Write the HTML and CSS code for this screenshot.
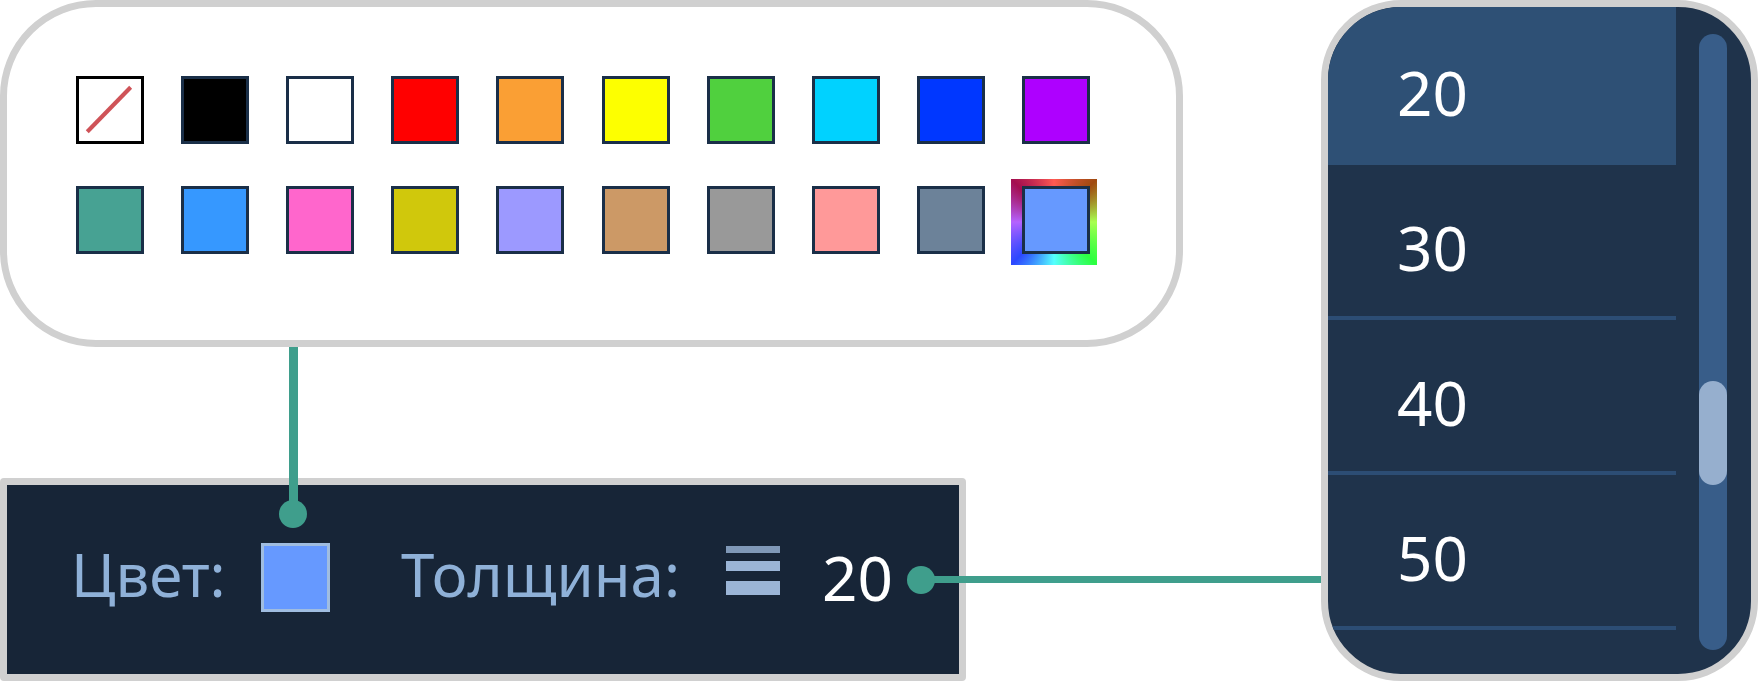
FILE: index.html
```html
<!DOCTYPE html>
<html lang="ru">
<head>
<meta charset="utf-8">
<meta name="viewport" content="width=device-width, initial-scale=1">
<title>Цвет и толщина</title>
<link rel="stylesheet" href="styles.css">
</head>
<body>
<main class="page">
  <div class="main-column">
    <section class="palette" aria-label="Палитра">
      <button class="swatch swatch--none" type="button" aria-label="Без цвета">
        <svg class="slash" viewBox="0 0 60 60" aria-hidden="true"><path d="M8 51 50 8"/></svg>
      </button>
      <button class="swatch swatch--black" type="button" aria-label="Чёрный"></button>
      <button class="swatch swatch--white" type="button" aria-label="Белый"></button>
      <button class="swatch swatch--red" type="button" aria-label="Красный"></button>
      <button class="swatch swatch--orange" type="button" aria-label="Оранжевый"></button>
      <button class="swatch swatch--yellow" type="button" aria-label="Жёлтый"></button>
      <button class="swatch swatch--green" type="button" aria-label="Зелёный"></button>
      <button class="swatch swatch--cyan" type="button" aria-label="Голубой"></button>
      <button class="swatch swatch--blue" type="button" aria-label="Синий"></button>
      <button class="swatch swatch--violet" type="button" aria-label="Фиолетовый"></button>
      <button class="swatch swatch--teal" type="button" aria-label="Бирюзовый"></button>
      <button class="swatch swatch--azure" type="button" aria-label="Лазурный"></button>
      <button class="swatch swatch--pink" type="button" aria-label="Розовый"></button>
      <button class="swatch swatch--olive" type="button" aria-label="Горчичный"></button>
      <button class="swatch swatch--lavender" type="button" aria-label="Лавандовый"></button>
      <button class="swatch swatch--tan" type="button" aria-label="Песочный"></button>
      <button class="swatch swatch--grey" type="button" aria-label="Серый"></button>
      <button class="swatch swatch--salmon" type="button" aria-label="Лососевый"></button>
      <button class="swatch swatch--slate" type="button" aria-label="Серо-синий"></button>
      <button class="swatch swatch--custom" type="button" aria-label="Другой цвет"></button>
    </section>

    <section class="toolbar" aria-label="Параметры линии">
      <div class="field">
        <span class="label" id="color-label">Цвет:</span>
        <div class="anchor">
          <button class="current-color" type="button" aria-labelledby="color-label"></button>
          <span class="connector connector--up"></span>
        </div>
      </div>
      <div class="field">
        <span class="label" id="width-label">Толщина:</span>
        <svg class="width-icon" viewBox="0 0 54 50" aria-hidden="true">
          <rect class="bar bar--thin" y="1" width="54" height="7"/>
          <rect class="bar" y="16" width="54" height="10"/>
          <rect class="bar" y="36" width="54" height="14"/>
        </svg>
        <button class="width-value" type="button" aria-labelledby="width-label">20</button>
      </div>
      <span class="connector connector--right"></span>
    </section>
  </div>

  <section class="dropdown" aria-label="Толщина">
    <div class="options">
      <button class="option option--selected" type="button">20</button>
      <button class="option" type="button">30</button>
      <button class="option" type="button">40</button>
      <button class="option" type="button">50</button>
    </div>
    <div class="scroll-track"><div class="scroll-thumb"></div></div>
  </section>
</main>
</body>
</html>
```
FILE: styles.css
```css
:root {
  --frame: #d0d0d0;
  --accent: #3f9e8c;
  --ink: #1a2f48;
  --label: #8fb1d8;
  --reach: 355px;
}

* { box-sizing: border-box; }

body {
  margin: 0;
  background: #fff;
  font-family: "Noto Sans", "Open Sans", sans-serif;
}

button {
  margin: 0;
  padding: 0;
  border: 0;
  background: none;
  font: inherit;
  cursor: pointer;
}

.page {
  display: grid;
  grid-template-columns: minmax(0, 1fr) 437px;
  column-gap: 138px;
}

.main-column {
  display: flex;
  flex-direction: column;
  gap: 131px;
}

/* Palette */
.palette {
  display: grid;
  grid-template-columns: repeat(10, 68px);
  justify-content: space-between;
  row-gap: 42px;
  padding: 69px 86px 86px 69px;
  border: 7px solid var(--frame);
  border-radius: 96px;
}

.swatch {
  height: 68px;
  border: 3px solid var(--ink);
}

.swatch--none { border-color: #000; }
.swatch--black { background: #000; }
.swatch--white { background: #fff; }
.swatch--red { background: #f00; }
.swatch--orange { background: #fa9f34; }
.swatch--yellow { background: #fdff00; }
.swatch--green { background: #50d03e; }
.swatch--cyan { background: #00d2ff; }
.swatch--blue { background: #0037ff; }
.swatch--violet { background: #ae00ff; }
.swatch--teal { background: #47a293; }
.swatch--azure { background: #3698ff; }
.swatch--pink { background: #ff66cc; }
.swatch--olive { background: #d0c80c; }
.swatch--lavender { background: #9c99ff; }
.swatch--tan { background: #cc9966; }
.swatch--grey { background: #999; }
.swatch--salmon { background: #ff9999; }
.swatch--slate { background: #6c8299; }

.swatch--custom {
  position: relative;
  z-index: 0;
}

.swatch--custom::before,
.swatch--custom::after {
  content: "";
  position: absolute;
  z-index: -1;
}

.swatch--custom::before {
  inset: -10px -10px -14px -14px;
  background: conic-gradient(#ff5a52, #a04a10 45deg, #a8ff50 90deg, #2cff40 135deg,
    #55ffff 180deg, #2c48ff 225deg, #b562ff 270deg, #a30e50 315deg, #ff5a52);
}

.swatch--custom::after {
  inset: -3px;
  border: 3px solid var(--ink);
  background: #6699ff;
}

.slash {
  display: block;
  width: 100%;
  fill: none;
  stroke: #cf5358;
  stroke-width: 4;
}

/* Toolbar */
.toolbar {
  position: relative;
  display: flex;
  align-items: center;
  justify-content: space-between;
  margin-right: 217px;
  padding: 49px 66px 53px 64px;
  border: 7px solid var(--frame);
  border-radius: 4px;
  background: #172537;
}

.field {
  display: flex;
  align-items: center;
}

.label {
  padding-bottom: 7px;
  color: var(--label);
  font-size: 60px;
  line-height: 80px;
}

.anchor {
  position: relative;
  margin-left: 35px;
}

.current-color {
  display: block;
  width: 69px;
  height: 69px;
  border: 3px solid #a0bde0;
  background: #6699ff;
}

.width-icon {
  width: 54px;
  height: 50px;
  margin: 0 42px 16px 46px;
}

.bar { fill: #9bb5d6; }
.bar--thin { fill: #7f98b7; }

.width-value {
  color: #fff;
  font-size: 62px;
  line-height: 87px;
}

/* Callout lines */
.connector {
  position: absolute;
  background: var(--accent);
}

.connector::after {
  content: "";
  position: absolute;
  width: 28px;
  height: 28px;
  border-radius: 50%;
  background: var(--accent);
}

.connector--up {
  left: 28px;
  bottom: 98px;
  width: 9px;
  height: 167px;
}

.connector--up::after {
  left: -10px;
  bottom: -14px;
}

.connector--right {
  right: calc(-7px - var(--reach));
  top: 91px;
  width: calc(45px + var(--reach));
  height: 7px;
}

.connector--right::after {
  left: -14px;
  top: -10px;
}

/* Thickness list */
.dropdown {
  display: flex;
  gap: 23px;
  padding-right: 24px;
  overflow: hidden;
  border: 7px solid var(--frame);
  border-radius: 80px;
  background: #1f334b;
}

.options {
  flex: 1;
  display: flex;
  flex-direction: column;
  padding-bottom: 44px;
}

.option {
  padding: 39px 69px 25px;
  border-bottom: 4px solid #2c4d74;
  color: #fff;
  font-size: 62px;
  line-height: 87px;
  text-align: left;
}

.option--selected {
  padding-top: 42px;
  background: #2e5075;
  border-color: #2e5075;
}

.scroll-track {
  width: 28px;
  margin: 27px 0 24px;
  padding-top: 347px;
  border-radius: 14px;
  background: #385d89;
}

.scroll-thumb {
  height: 104px;
  border-radius: 14px;
  background: #96afce;
}
```
